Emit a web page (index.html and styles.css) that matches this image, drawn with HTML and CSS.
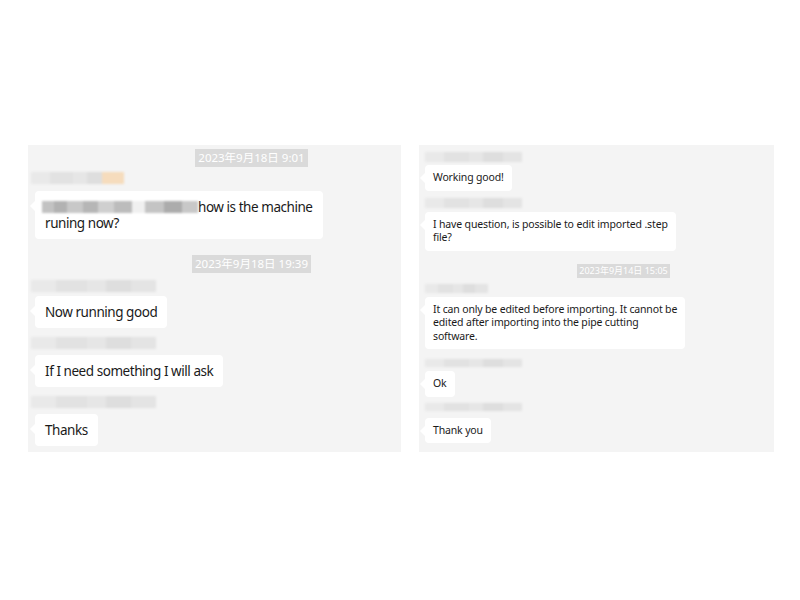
FILE: index.html
```html
<!DOCTYPE html>
<html>
<head>
<meta charset="utf-8">
<link rel="stylesheet" href="styles.css">
</head>
<body>
<div class="wrap">
  <section class="panel left">
    <div class="ts-row ts1"><span class="ts">2023年9月18日 9:01</span></div>
    <div class="name n1"><span class="orange"></span></div>
    <div class="bubble b1"><span class="redact"></span>how is the machine<br>runing now?</div>
    <div class="ts-row ts2"><span class="ts">2023年9月18日 19:39</span></div>
    <div class="name n2"></div>
    <div class="bubble b2">Now running good</div>
    <div class="name n3"></div>
    <div class="bubble b3">If I need something I will ask</div>
    <div class="name n4"></div>
    <div class="bubble b4">Thanks</div>
  </section>
  <section class="panel right">
    <div class="name r1"></div>
    <div class="bubble s1">Working good!</div>
    <div class="name r2"></div>
    <div class="bubble s2">I have question, is possible to edit imported .step<br>file?</div>
    <div class="ts-row ts3"><span class="ts">2023年9月14日 15:05</span></div>
    <div class="name r3"></div>
    <div class="bubble s3">It can only be edited before importing. It cannot be<br>edited after importing into the pipe cutting<br>software.</div>
    <div class="name r4"></div>
    <div class="bubble s4">Ok</div>
    <div class="name r5"></div>
    <div class="bubble s5">Thank you</div>
  </section>
</div>
</body>
</html>
```
FILE: styles.css
```css
* { box-sizing: border-box; }
body {
  margin: 0;
  background: #ffffff;
  font-family: "Noto Sans", "Noto Sans CJK SC", sans-serif;
  color: #1a1a1a;
}
.wrap {
  display: flex;
  gap: 18px;
  padding: 145px 0 0 28px;
}
.panel {
  background: #f4f4f4;
  height: 307px;
  display: flex;
  flex-direction: column;
  align-items: flex-start;
  overflow: hidden;
}
.left { width: 373px; padding: 0 7px; }
.right { width: 355px; padding: 0 6px; }

.ts-row {
  align-self: stretch;
  display: flex;
  justify-content: center;
}
.ts {
  background: #dadada;
  color: #ffffff;
  white-space: nowrap;
}
.left .ts { font-size: 11.5px; height: 18px; line-height: 18px; padding: 0 3px; }
.right .ts { font-size: 9px; height: 14px; line-height: 14px; padding: 0 2px; }
.ts1 { margin-top: 4px; padding-left: 74px; }
.ts2 { margin-top: 16px; padding-left: 74px; }
.ts3 { margin-top: 13px; padding-left: 54px; }

.name {
  margin-left: -4px;
  filter: blur(1px);
  background: linear-gradient(90deg, #e9e9e9 0 20%, #e2e2e2 20% 45%, #e6e6e6 45% 60%, #dedede 60% 80%, #e4e4e4 80% 100%);
}
.n1 { width: 93px; height: 12px; margin-top: 5px; position: relative; }
.orange {
  position: absolute;
  right: 0; top: 0;
  width: 22px; height: 12px;
  background: #f6dcbd;
}
.n2 { width: 125px; height: 12px; margin-top: 7px; }
.n3 { width: 125px; height: 12px; margin-top: 9px; }
.n4 { width: 125px; height: 12px; margin-top: 9px; }
.r1 { width: 97px; height: 10px; margin-top: 7px; margin-left: 0; }
.r2 { width: 97px; height: 10px; margin-top: 7px; margin-left: 0; }
.r3 { width: 63px; height: 9px; margin-top: 6px; margin-left: 0; }
.r4 { width: 97px; height: 8px; margin-top: 10px; margin-left: 0; }
.r5 { width: 97px; height: 8px; margin-top: 6px; margin-left: 0; }

.bubble {
  position: relative;
  background: #ffffff;
  border-radius: 4px;
  white-space: nowrap;
}
.bubble::before {
  content: "";
  position: absolute;
  left: -5px;
  border-right: 5px solid #ffffff;
  border-top: 5px solid transparent;
  border-bottom: 5px solid transparent;
}
.left .bubble {
  font-size: 13.5px;
  letter-spacing: -0.45px;
  line-height: 16px;
  padding: 8px 10px;
}
.left .bubble::before { top: 10px; }
.right .bubble {
  font-size: 10.5px;
  letter-spacing: -0.15px;
  line-height: 13.5px;
  padding: 6px 8px;
}
.right .bubble::before { top: 8px; }

.b1 { margin-top: 7px; }
.b2 { margin-top: 4px; }
.b3 { margin-top: 6px; }
.b4 { margin-top: 6px; }
.s1 { margin-top: 3px; }
.s2 { margin-top: 4px; }
.s3 { margin-top: 4px; }
.s4 { margin-top: 4px; }
.s5 { margin-top: 7px; }

.redact {
  display: inline-block;
  vertical-align: -1px;
  width: 156px;
  height: 12px;
  margin-left: -3px;
  filter: blur(0.8px);
  background: linear-gradient(90deg, #c2c2c2 0 8%, #b2b2b2 8% 16%, #c8c8c8 16% 26%, #b6b6b6 26% 36%, #cfcfcf 36% 46%, #bcbcbc 46% 58%, #f0f0f0 58% 66%, #c4c4c4 66% 78%, #acacac 78% 90%, #c8c8c8 90% 100%);
}
```
